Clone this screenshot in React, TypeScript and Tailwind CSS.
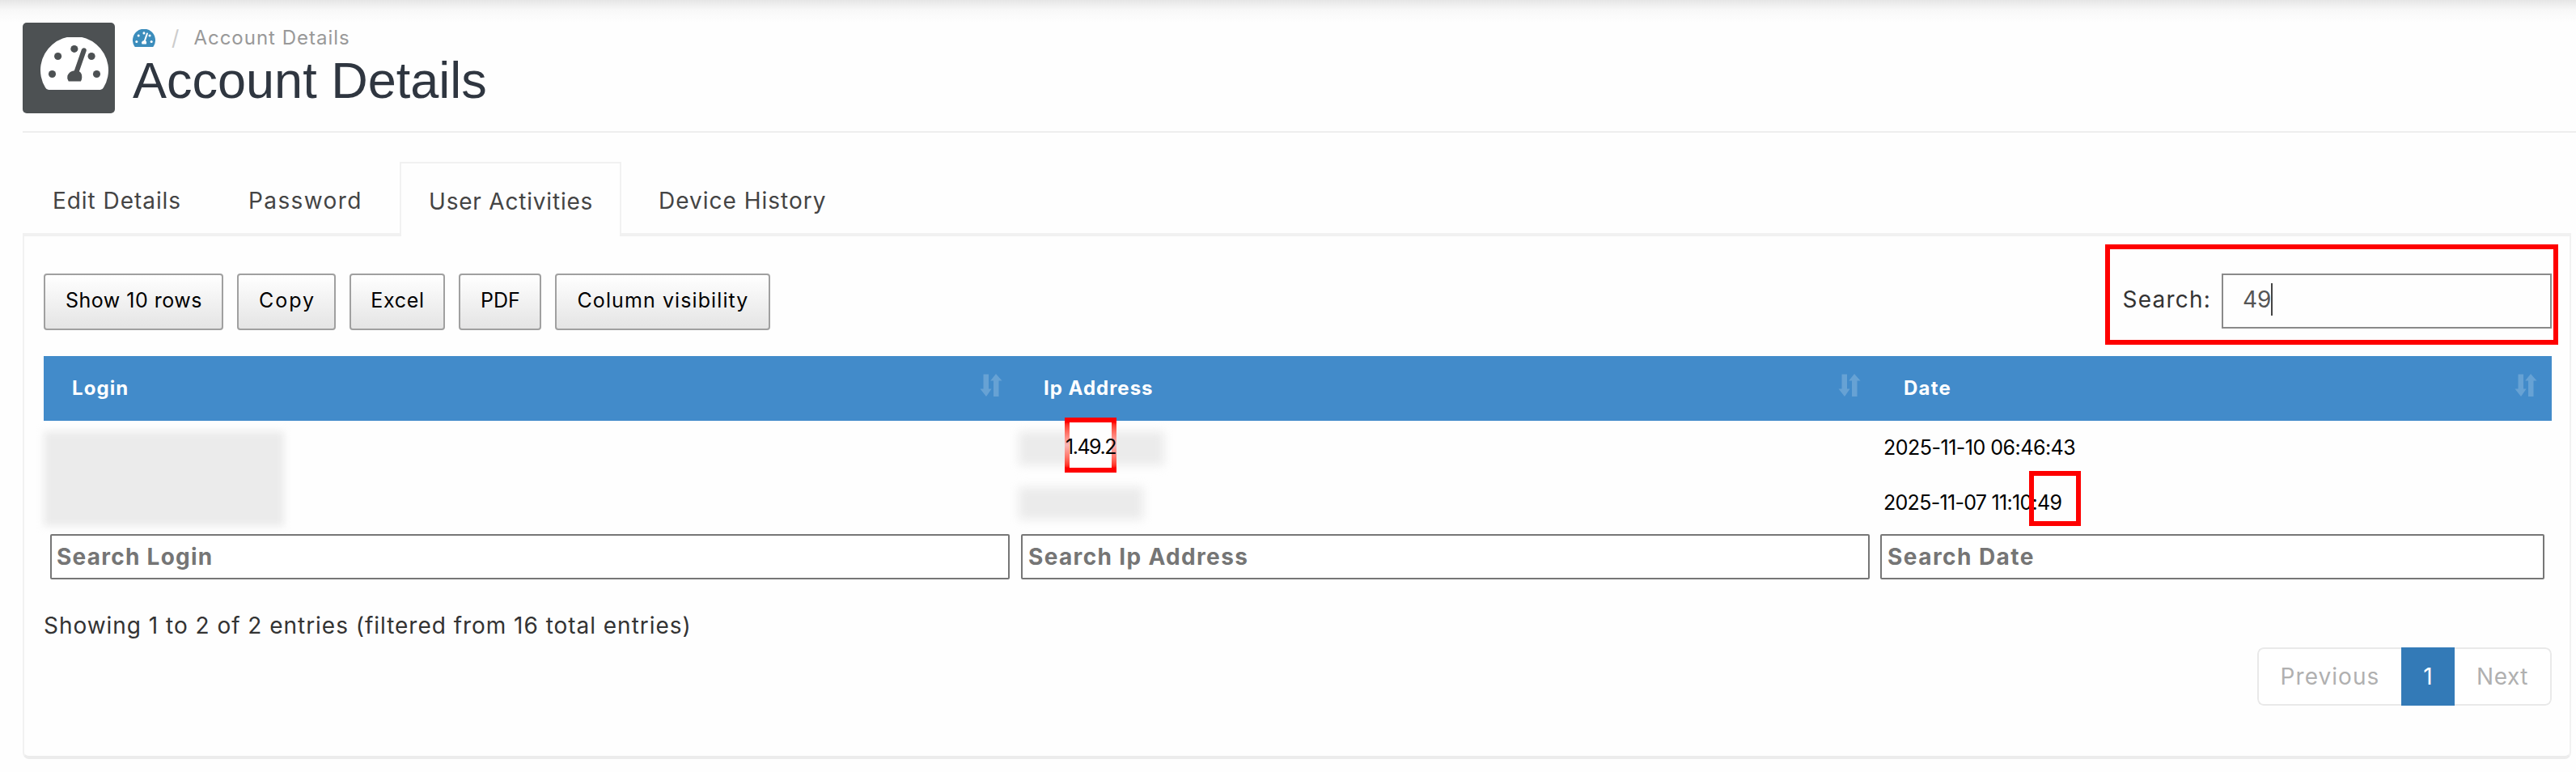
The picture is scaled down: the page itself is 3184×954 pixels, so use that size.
import React from 'react';

function Gauge({ className }: { className: string }) {
  return (
    <svg viewBox="92 80 249 194" preserveAspectRatio="none" className={className} aria-hidden="true">
      <defs>
        <mask id="gauge-cut">
          <rect x="92" y="80" width="249" height="194" fill="white" />
          <g fill="black">
            <circle cx="135" cy="216" r="13.5" />
            <circle cx="156" cy="150" r="13.5" />
            <circle cx="216" cy="123" r="13.5" />
            <circle cx="279" cy="150" r="13.5" />
            <circle cx="298" cy="216" r="13.5" />
            <path d="M195 243 Q188 232 191 222 Q197 206 216 203 L243 125 Q247 117 255 120 Q262 123 260 131 L234 206 Q245 213 244 228 Q244 237 240 243 Z" />
          </g>
        </mask>
      </defs>
      <path
        mask="url(#gauge-cut)"
        fill="currentColor"
        d="M122 274 Q114 274 110 266 A124.5 124.5 0 1 1 323 266 Q319 274 311 274 Z"
      />
    </svg>
  );
}

function SortArrows() {
  return (
    <svg viewBox="0 0 28 28" className="h-[28px] w-[28px] shrink-0 -translate-y-1 text-white/20" aria-hidden="true">
      <path
        fill="currentColor"
        d="M4.5 0.5h6.5v18h3.6L8 28 0.5 18.5h4zM20 0l7.5 8.5h-4v19.5h-6.5V8.5h-3.8z"
      />
    </svg>
  );
}

const tabs = [
  { label: 'Edit Details', cls: 'w-[232px] pl-[37px] tracking-[0.95px]' },
  { label: 'Password', cls: 'w-[234px] pl-[47px] tracking-[1.4px]' },
  { label: 'User Activities', cls: 'w-[274px] pl-[34px] tracking-[0.8px] border-2 border-b-0 border-[#f1f1f1] bg-[#fefefe]' },
  { label: 'Device History', cls: 'w-[300px] pl-[46px] tracking-[1px]' },
];

const buttons = [
  { label: 'Show 10 rows', cls: 'w-[222px] pl-[1px] tracking-[0.5px]' },
  { label: 'Copy', cls: 'w-[122px] pl-[2px] tracking-[2px]' },
  { label: 'Excel', cls: 'w-[118px] pl-[1px] tracking-[0.7px]' },
  { label: 'PDF', cls: 'w-[102px] pl-[1px] tracking-[0px]' },
  { label: 'Column visibility', cls: 'w-[266px] pl-[1px] tracking-[1.1px]' },
];

const columns = [
  { label: 'Login', cls: 'pr-[16px] tracking-[1.1px]' },
  { label: 'Ip Address', cls: 'pr-[18px] tracking-[1px]' },
  { label: 'Date', cls: 'pr-[18px] tracking-[1.2px]' },
];

const filters = [
  { label: 'Search Login', cls: 'ml-2 mr-[7px] pl-[6px] tracking-[1.25px]' },
  { label: 'Search Ip Address', cls: 'ml-[7px] mr-[7px] pl-[7px] tracking-[1.35px]' },
  { label: 'Search Date', cls: 'ml-[6px] mr-[9px] pl-[7px] tracking-[1.45px]' },
];

export default function App() {
  return (
    <div className="flex h-[954px] w-[3184px] flex-col overflow-hidden bg-[#fefefe] font-['Inter',sans-serif] text-[28px] text-[#333]">
      <div className="h-[28px] shrink-0 bg-linear-to-b from-[#e6e6e6] via-[#f8f8f8] via-45% to-[#fefefe]" />

      <header className="ml-[28px] flex h-[136px] shrink-0 border-b-2 border-[#eee]">
        <div className="flex h-[112px] w-[114px] rounded-[5px] bg-[#4d5153] pt-[18px] pl-[22px] text-white">
          <Gauge className="h-[65px] w-[84px]" />
        </div>
        <div className="ml-[22px] flex flex-col">
          <div className="flex h-[38px] items-center text-[24px] leading-[38px] text-[#999]">
            <Gauge className="h-[22px] w-[28px] text-[#3c8dbc]" />
            <span className="ml-[20px] text-[26px] leading-[38px] text-[#ccc]">/</span>
            <span className="ml-[18px] tracking-[1px]">Account Details</span>
          </div>
          <h1 className="mt-[-3px] font-['Liberation_Sans',sans-serif] text-[63px] leading-[72px] whitespace-nowrap text-[#2f3640]">
            Account Details
          </h1>
        </div>
      </header>

      <nav className="relative z-10 ml-[28px] mt-[36px] flex h-[92px] w-[3150px] shrink-0 bg-linear-to-t from-[#f1f1f1] from-[4px] to-transparent to-[4px] text-[#444]">
        {tabs.map((t) => (
          <div key={t.label} className={`flex items-center whitespace-nowrap pb-1 pt-2 ${t.cls}`}>
            {t.label}
          </div>
        ))}
      </nav>

      <main className="ml-[28px] flex h-[646px] w-[3150px] shrink-0 flex-col rounded-b-[8px] border-x-2 border-b-4 border-x-[#f1f1f1] border-b-[#ececec] pr-[22px] pl-[24px]">
        <div className="relative mt-[46px] flex h-[70px] justify-between">
          <div className="flex gap-x-[17px] text-[25px] text-black">
            {buttons.map((b) => (
              <button
                key={b.label}
                className={`flex h-[70px] items-center justify-center rounded-[4px] border-2 border-[#a0a0a0] bg-linear-to-b from-white to-[#e4e4e4] pb-[3px] whitespace-nowrap ${b.cls}`}
              >
                {b.label}
              </button>
            ))}
          </div>
          <div className="flex">
            <span className="mr-[13px] leading-[64px] tracking-[1.2px]">Search:</span>
            <div className="flex h-[68px] w-[408px] border-2 border-[#8a8a8a] pl-[24px] text-[#555]">
              <span className="leading-[60px]">49</span>
              <span className="mt-[10px] h-[40px] w-[2px] bg-[#444]" />
            </div>
          </div>
          <div className="absolute top-[-36px] right-[-8px] h-[124px] w-[560px] border-6 border-[#fe0000]" />
        </div>

        <section className="mt-[32px] shrink-0">
          <div className="grid h-[80px] grid-cols-[1201px_1063px_836px] bg-[#428bca] text-[24px] font-bold text-white">
            {columns.map((c) => (
              <div key={c.label} className={`flex items-center justify-between pl-[35px] ${c.cls}`}>
                <span>{c.label}</span>
                <SortArrows />
              </div>
            ))}
          </div>

          <div className="grid h-[136px] grid-cols-[1201px_1063px_836px] text-[25px] text-black">
            <div className="pt-[13px]">
              <div className="h-[117px] w-[297px] bg-[#ebebeb] blur-[5px]" />
            </div>
            <div className="grid grid-rows-2">
              <div className="relative flex items-center">
                <div className="ml-[4px] h-[42px] w-[180px] bg-[#ebebeb] blur-[6px]" />
                <div className="absolute top-[-4px] left-[61px] flex h-[68px] w-[64px] flex-col">
                  <div className="h-[6px] bg-[#fe0000]" />
                  <div className="flex flex-1 justify-between bg-[#fefefe]">
                    <div className="w-[6px] bg-linear-to-b from-[#fe0000] via-[#f8b5b5] to-[#fe0000]" />
                    <div className="w-[6px] bg-linear-to-b from-[#fe0000] via-[#f8b5b5] to-[#fe0000]" />
                  </div>
                  <div className="h-[6px] bg-[#fe0000]" />
                  <span className="absolute inset-x-0 top-[3px] flex h-[68px] items-center justify-center tracking-[-1.5px] whitespace-nowrap">
                    1.49.2
                  </span>
                </div>
              </div>
              <div className="flex items-center">
                <div className="ml-[4px] h-[40px] w-[154px] bg-[#ebebeb] blur-[6px]" />
              </div>
            </div>
            <div className="grid grid-rows-2 pl-[10px]">
              <div className="flex items-center pb-[1px] tracking-[-0.5px]">2025-11-10 06:46:43</div>
              <div className="relative flex items-center tracking-[-0.7px]">
                2025-11-07 11:10:49
                <div className="absolute top-[-6px] left-[180px] h-[68px] w-[64px] border-6 border-[#fe0000]" />
              </div>
            </div>
          </div>

          <div className="grid h-[64px] grid-cols-[1201px_1063px_836px] py-1 font-bold text-[#757575]">
            {filters.map((f) => (
              <div
                key={f.label}
                className={`flex items-center rounded-[2px] border-2 border-[#767676] bg-white pb-[1px] ${f.cls}`}
              >
                {f.label}
              </div>
            ))}
          </div>
        </section>

        <p className="mt-[32px] h-[42px] leading-[42px] tracking-[0.97px]">
          Showing 1 to 2 of 2 entries (filtered from 16 total entries)
        </p>

        <div className="mt-[6px] flex h-[72px] w-[364px] shrink-0 self-end overflow-hidden rounded-[8px] bg-white text-[#b0b0b0]">
          <div className="flex w-[178px] items-center justify-center rounded-l-[8px] border-2 border-r-0 border-[#e9e9e9] tracking-[1.05px]">
            Previous
          </div>
          <div className="flex w-[66px] items-center justify-center bg-[#337ab7] text-white">1</div>
          <div className="flex w-[120px] items-center justify-center rounded-r-[8px] border-2 border-l-0 border-[#e9e9e9] tracking-[0.5px]">
            Next
          </div>
        </div>
      </main>
    </div>
  );
}
